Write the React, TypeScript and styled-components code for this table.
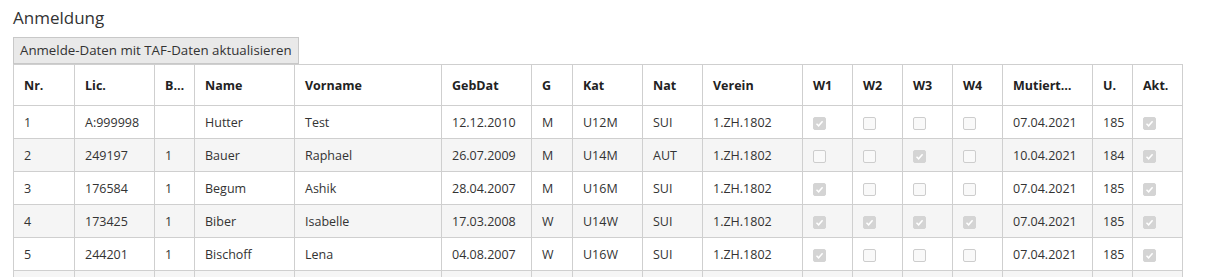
import React from "react";
import styled, { createGlobalStyle } from "styled-components";

const Global = createGlobalStyle`
  html, body { margin: 0; padding: 0; background: #fff; overflow: hidden; }
  body { font-family: "Open Sans", "Noto Sans", sans-serif; color: #333; }
`;

const Page = styled.div`
  padding: 6px 0 0 13px;
  width: 1169px;
`;

const Title = styled.h4`
  margin: 0 0 8px 0;
  font-size: 17px;
  font-weight: 400;
  line-height: 23px;
  color: #333;
`;

const Button = styled.button`
  display: block;
  height: 27px;
  padding: 0 6px;
  margin: 0;
  border: 1px solid #c8c8c8;
  background: #e9e9e9;
  color: #333;
  font-family: inherit;
  font-size: 13.3px;
  line-height: 25px;
  cursor: pointer;
`;

const Table = styled.table`
  border-collapse: collapse;
  table-layout: fixed;
  width: 1169px;
  font-size: 12.5px;
`;

const Th = styled.th`
  height: 40px;
  padding: 0 10px;
  border: 1px solid #cfcfcf;
  text-align: left;
  font-weight: 700;
  color: #222;
  white-space: nowrap;
  overflow: hidden;
  text-overflow: ellipsis;
  background: #fff;
`;

const Tr = styled.tr<{ $striped: boolean }>`
  background: ${(p) => (p.$striped ? "#f5f5f5" : "#fff")};
`;

const Td = styled.td`
  height: 32px;
  padding: 0 10px;
  border: 1px solid #cfcfcf;
  white-space: nowrap;
  overflow: hidden;
  color: #333;
  vertical-align: middle;
`;

const Box = styled.span<{ $checked: boolean }>`
  display: inline-flex;
  align-items: center;
  justify-content: center;
  box-sizing: border-box;
  width: 13px;
  height: 13px;
  border-radius: 2px;
  vertical-align: middle;
  background: ${(p) => (p.$checked ? "#d4d4d4" : "#f9f9f9")};
  border: 1px solid ${(p) => (p.$checked ? "#d4d4d4" : "#cdcdcd")};
`;

const Check = ({ on }: { on: boolean }) => (
  <Box $checked={on}>
    {on && (
      <svg width="9" height="9" viewBox="0 0 9 9">
        <path d="M1.5 4.8 L3.6 6.8 L7.6 2.2" fill="none" stroke="#fff" strokeWidth="1.5" />
      </svg>
    )}
  </Box>
);

const cols = [61, 80, 40, 100, 147, 90, 41, 70, 60, 100, 50, 50, 50, 50, 90, 40, 50];
const heads = ["Nr.", "Lic.", "B…", "Name", "Vorname", "GebDat", "G", "Kat", "Nat", "Verein", "W1", "W2", "W3", "W4", "Mutiert…", "U.", "Akt."];

type Row = {
  nr: string; lic: string; b: string; name: string; vorname: string; geb: string; g: string;
  kat: string; nat: string; verein: string; w: boolean[]; mut: string; u: string; akt: boolean;
};

const rows: Row[] = [
  { nr: "1", lic: "A:999998", b: "", name: "Hutter", vorname: "Test", geb: "12.12.2010", g: "M", kat: "U12M", nat: "SUI", verein: "1.ZH.1802", w: [true, false, false, false], mut: "07.04.2021", u: "185", akt: true },
  { nr: "2", lic: "249197", b: "1", name: "Bauer", vorname: "Raphael", geb: "26.07.2009", g: "M", kat: "U14M", nat: "AUT", verein: "1.ZH.1802", w: [false, false, true, false], mut: "10.04.2021", u: "184", akt: true },
  { nr: "3", lic: "176584", b: "1", name: "Begum", vorname: "Ashik", geb: "28.04.2007", g: "M", kat: "U16M", nat: "SUI", verein: "1.ZH.1802", w: [true, false, false, false], mut: "07.04.2021", u: "185", akt: true },
  { nr: "4", lic: "173425", b: "1", name: "Biber", vorname: "Isabelle", geb: "17.03.2008", g: "W", kat: "U14W", nat: "SUI", verein: "1.ZH.1802", w: [true, true, true, true], mut: "07.04.2021", u: "185", akt: true },
  { nr: "5", lic: "244201", b: "1", name: "Bischoff", vorname: "Lena", geb: "04.08.2007", g: "W", kat: "U16W", nat: "SUI", verein: "1.ZH.1802", w: [true, false, false, false], mut: "07.04.2021", u: "185", akt: true },
  { nr: "", lic: "", b: "", name: "", vorname: "", geb: "", g: "", kat: "", nat: "", verein: "", w: [false, false, false, false], mut: "", u: "", akt: false },
];

export default function App() {
  return (
    <>
      <Global />
      <Page>
        <Title>Anmeldung</Title>
        <Button>Anmelde-Daten mit TAF-Daten aktualisieren</Button>
        <Table>
          <colgroup>
            {cols.map((w, i) => (
              <col key={i} style={{ width: w }} />
            ))}
          </colgroup>
          <thead>
            <tr>
              {heads.map((h) => (
                <Th key={h}>{h}</Th>
              ))}
            </tr>
          </thead>
          <tbody>
            {rows.map((r, i) => (
              <Tr key={i} $striped={i % 2 === 1}>
                <Td>{r.nr}</Td>
                <Td>{r.lic}</Td>
                <Td>{r.b}</Td>
                <Td>{r.name}</Td>
                <Td>{r.vorname}</Td>
                <Td>{r.geb}</Td>
                <Td>{r.g}</Td>
                <Td>{r.kat}</Td>
                <Td>{r.nat}</Td>
                <Td>{r.verein}</Td>
                {r.w.map((on, j) => (
                  <Td key={j}>{r.verein && <Check on={on} />}</Td>
                ))}
                <Td>{r.mut}</Td>
                <Td>{r.u}</Td>
                <Td>{r.verein && <Check on={r.akt} />}</Td>
              </Tr>
            ))}
          </tbody>
        </Table>
      </Page>
    </>
  );
}
